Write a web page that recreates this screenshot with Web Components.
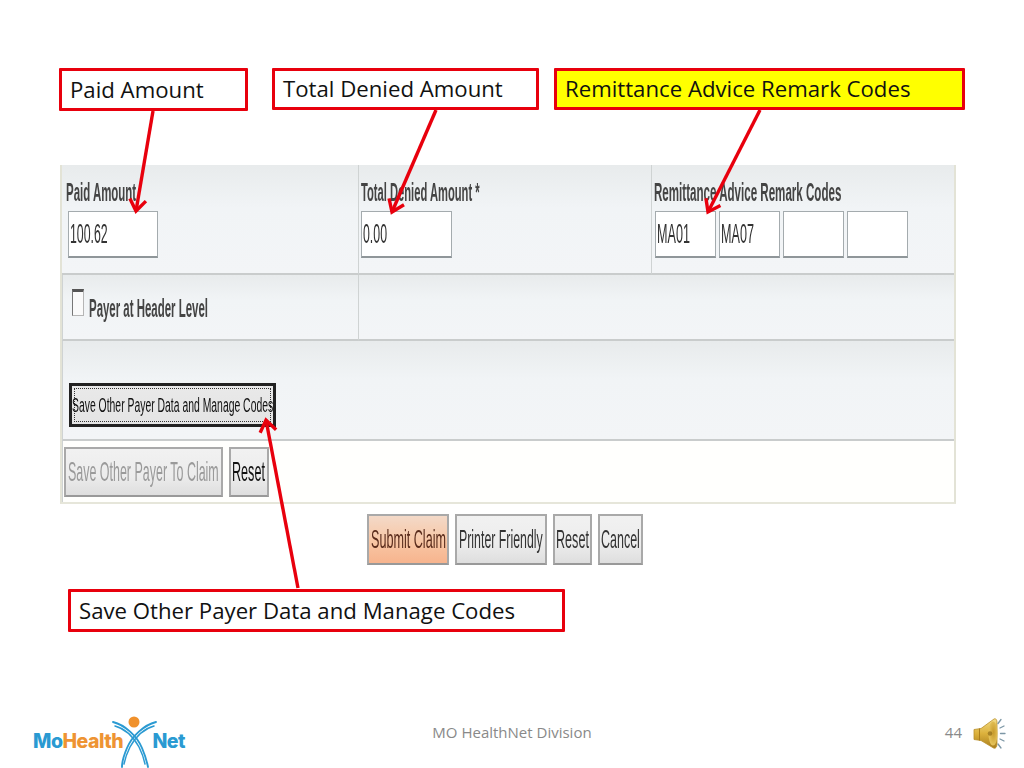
<!DOCTYPE html>
<html lang="en">
<head>
<meta charset="utf-8">
<title>MO HealthNet slide 44</title>
<style>
  html, body { margin: 0; padding: 0; background: #fff; }
</style>
</head>
<body>
<slide-page>
  <callout-row slot="callouts">
    <call-out w="189" h="43">Paid Amount</call-out>
    <call-out w="267" h="42">Total Denied Amount</call-out>
    <call-out w="411" h="42" fill="#ffff00">Remittance Advice Remark Codes</call-out>
  </callout-row>

  <claim-form slot="form"></claim-form>

  <action-row slot="actions">
    <old-button w="82" tone="submit"><squeeze-text w="75" size="26" sx=".485" color="#5a2c1c">Submit Claim</squeeze-text></old-button>
    <old-button w="92"><squeeze-text w="85" size="26" sx=".475" color="#333">Printer Friendly</squeeze-text></old-button>
    <old-button w="39"><squeeze-text w="33" size="26" sx=".485" color="#333">Reset</squeeze-text></old-button>
    <old-button w="45"><squeeze-text w="39" size="26" sx=".48" color="#333">Cancel</squeeze-text></old-button>
  </action-row>

  <call-out slot="bottom" w="497" h="43">Save Other Payer Data and Manage Codes</call-out>

  <slide-footer slot="footer" page="44">MO HealthNet Division</slide-footer>
</slide-page>

<script>
// squashed screenshot text: laid out at its final width, drawn wide then scaled down
class SqueezeText extends HTMLElement {
    constructor() {
        super();
        this.attachShadow({ mode: "open" });
    }
    connectedCallback() {
        const w = this.getAttribute("w");
        const size = this.getAttribute("size") || 26;
        const sx = this.getAttribute("sx") || 0.5;
        const weight = this.getAttribute("weight") || 400;
        const color = this.getAttribute("color") || "#333";
        this.shadowRoot.innerHTML = `
            <style>
                :host { display: inline-block; width: ${w}px; height: ${size * 1.1}px; flex: none; }
                span {
                    display: inline-block;
                    white-space: nowrap;
                    font: ${weight} ${size}px/1.1 "Liberation Sans", Arial, sans-serif;
                    color: ${color};
                    transform: scaleX(${sx});
                    transform-origin: 0 50%;
                }
            </style>
            <span><slot></slot></span>
        `;
    }
}
customElements.define("squeeze-text", SqueezeText);

class CallOut extends HTMLElement {
    constructor() {
        super();
        this.attachShadow({ mode: "open" });
    }
    connectedCallback() {
        const fill = this.getAttribute("fill") || "#fff";
        this.shadowRoot.innerHTML = `
            <style>
                :host {
                    display: flex;
                    align-items: center;
                    box-sizing: border-box;
                    width: ${this.getAttribute("w")}px;
                    height: ${this.getAttribute("h")}px;
                    padding: 0 0 1px 8px;
                    background: ${fill};
                    border: 3px solid #e8000d;
                    border-radius: 1px;
                    font: 400 22.2px "Open Sans", sans-serif;
                    color: #111;
                    white-space: nowrap;
                }
            </style>
            <slot></slot>
        `;
    }
}
customElements.define("call-out", CallOut);

class CalloutRow extends HTMLElement {
    constructor() {
        super();
        this.attachShadow({ mode: "open" }).innerHTML = `
            <style>
                :host { display: flex; align-items: flex-start; gap: 24px; padding-left: 59px; }
                ::slotted(:last-child) { margin-left: -9px; }
            </style>
            <slot></slot>
        `;
    }
}
customElements.define("callout-row", CalloutRow);

class ActionRow extends HTMLElement {
    constructor() {
        super();
        this.attachShadow({ mode: "open" }).innerHTML = `
            <style>
                :host { display: flex; gap: 6px; padding-left: 367px; filter: blur(.35px); }
            </style>
            <slot></slot>
        `;
    }
}
customElements.define("action-row", ActionRow);

class OldButton extends HTMLElement {
    constructor() {
        super();
        this.attachShadow({ mode: "open" });
    }
    connectedCallback() {
        const tone = this.getAttribute("tone");
        const bg = tone === "submit"
            ? "linear-gradient(#f3d9c8, #f8c6a4 55%, #f7b48e)"
            : "linear-gradient(#f1f1f1, #ececec 60%, #dedede)";
        this.shadowRoot.innerHTML = `
            <style>
                :host {
                    display: flex;
                    align-items: center;
                    justify-content: center;
                    box-sizing: border-box;
                    flex: none;
                    width: ${this.getAttribute("w")}px;
                    height: ${this.getAttribute("h") || 51}px;
                    background: ${bg};
                    border: 2px solid #a9a9a9;
                    border-bottom-color: #999;
                }
            </style>
            <slot></slot>
        `;
    }
}
customElements.define("old-button", OldButton);

class TextBox extends HTMLElement {
    constructor() {
        super();
        this.attachShadow({ mode: "open" });
    }
    connectedCallback() {
        this.shadowRoot.innerHTML = `
            <style>
                :host {
                    display: flex;
                    align-items: center;
                    box-sizing: border-box;
                    flex: none;
                    width: ${this.getAttribute("w")}px;
                    height: 47px;
                    padding-left: 1px;
                    background: #fff;
                    border: 1.5px solid #a4abae;
                    border-bottom: 2px solid #8f9699;
                }
            </style>
            <slot></slot>
        `;
    }
}
customElements.define("text-box", TextBox);

class FormField extends HTMLElement {
    constructor() {
        super();
        this.attachShadow({ mode: "open" }).innerHTML = `
            <style>
                :host { display: block; padding: 13px 0 0 var(--label-x, 4px); }
                .label { height: 33px; }
                .boxes { display: flex; gap: 3px; margin-left: var(--box-shift, 0); }
            </style>
            <div class="label"><slot name="label"></slot></div>
            <div class="boxes"><slot></slot></div>
        `;
    }
}
customElements.define("form-field", FormField);

class ClaimForm extends HTMLElement {
    constructor() {
        super();
        this.attachShadow({ mode: "open" }).innerHTML = `
            <style>
                :host {
                    display: block;
                    box-sizing: border-box;
                    width: 896px;
                    height: 339px;
                    margin-left: 60px;
                    border-left: 2px solid #e3e3d6;
                    border-right: 2px solid #e3e3d6;
                    border-bottom: 2px solid #e6e6da;
                    filter: blur(.35px);
                }
                .grid {
                    display: grid;
                    grid-template-columns: 296px 293px 1fr;
                    grid-template-rows: 110px 66px 100px 1fr;
                    height: 100%;
                }
                .cell {
                    box-sizing: border-box;
                    background: linear-gradient(#e8ebec, #f1f4f6 40%, #f3f5f7);
                    border-bottom: 2px solid #c9cccc;
                }
                .cell + .cell { border-left: 1px solid #cfd3d3; }
                .wide { grid-column: 2 / 4; }
                .full { grid-column: 1 / -1; }
                .c1 { --label-x: 4px; --box-shift: 2px; }
                .c2 { --label-x: 2px; }
                .c3 { --label-x: 2px; --box-shift: 1px; }
                .check {
                    display: flex;
                    align-items: flex-start;
                    gap: 5px;
                    padding: 14px 0 0 9px;
                }
                .tick {
                    width: 12px;
                    height: 27px;
                    box-sizing: border-box;
                    flex: none;
                    background: #fafafa;
                    border: 1px solid #b5b5b5;
                    border-top: 3px solid #555;
                    border-left-color: #777;
                }
                .check squeeze-text { margin-top: 5px; }
                .save-data { padding: 42px 0 0 6px; }
                .save-data old-button {
                    border: 3px solid #222;
                    background: linear-gradient(#e9e9e9, #e4e4e4);
                    outline: 1px dotted #333;
                    outline-offset: -6px;
                }
                .bottom {
                    display: flex;
                    gap: 6px;
                    align-items: flex-start;
                    padding: 6px 0 0 1px;
                    background: #fffffd;
                    border-bottom: 0;
                }
            </style>
            <div class="grid">
                <div class="cell c1">
                    <form-field>
                        <squeeze-text slot="label" w="70" size="26" sx=".44" weight="700" color="#444">Paid Amount</squeeze-text>
                        <text-box w="90"><squeeze-text w="40" size="28" sx=".44">100.62</squeeze-text></text-box>
                    </form-field>
                </div>
                <div class="cell c2">
                    <form-field>
                        <squeeze-text slot="label" w="118" size="26" sx=".43" weight="700" color="#444">Total Denied Amount *</squeeze-text>
                        <text-box w="91"><squeeze-text w="26" size="28" sx=".44">0.00</squeeze-text></text-box>
                    </form-field>
                </div>
                <div class="cell c3">
                    <form-field>
                        <squeeze-text slot="label" w="187" size="26" sx=".445" weight="700" color="#444">Remittance Advice Remark Codes</squeeze-text>
                        <text-box w="61"><squeeze-text w="34" size="28" sx=".45">MA01</squeeze-text></text-box>
                        <text-box w="61"><squeeze-text w="34" size="28" sx=".45">MA07</squeeze-text></text-box>
                        <text-box w="61"></text-box>
                        <text-box w="61"></text-box>
                    </form-field>
                </div>

                <div class="cell check">
                    <span class="tick"></span>
                    <squeeze-text w="122" size="26" sx=".44" weight="700" color="#444">Payer at Header Level</squeeze-text>
                </div>
                <div class="cell wide"></div>

                <div class="cell full save-data">
                    <old-button w="207" h="44"><squeeze-text w="201" size="20" sx=".52" color="#111">Save Other Payer Data and Manage Codes</squeeze-text></old-button>
                </div>

                <div class="cell full bottom">
                    <old-button w="159" h="50"><squeeze-text w="152" size="28" sx=".445" color="#9a9a9a">Save Other Payer To Claim</squeeze-text></old-button>
                    <old-button w="40" h="50"><squeeze-text w="34" size="28" sx=".45" color="#111">Reset</squeeze-text></old-button>
                </div>
            </div>
        `;
    }
}
customElements.define("claim-form", ClaimForm);

class BrandLogo extends HTMLElement {
    constructor() {
        super();
        this.attachShadow({ mode: "open" }).innerHTML = `
            <style>
                :host { display: block; position: relative; width: 154px; height: 56px; margin-left: 33px; }
                .name {
                    position: absolute;
                    left: 0;
                    top: 18px;
                    width: 152px;
                    display: flex;
                    justify-content: space-between;
                    font: 800 19.5px/22px Inter, sans-serif;
                    letter-spacing: -.5px;
                    color: #2a9ad2;
                }
                .name b { font-weight: 800; color: #ee9433; }
                svg { position: absolute; left: 0; top: 0; }
            </style>
            <div class="name"><span>Mo<b>Health</b></span><span>Net</span></div>
            <svg width="154" height="56" viewBox="0 0 154 56" fill="none">
                <circle cx="101" cy="10" r="5.500" fill="#f0912c"/>
                <g stroke="#2a9ad2" stroke-linecap="round">
                    <path d="M80 10C92 13 104 24 109 36C112 43 114 50 115 55" stroke-width="1.900"/>
                    <path d="M82 14C93 17 101 26 106 35C109 41 111 47 112 52" stroke-width="1.500"/>
                    <path d="M123 10C111 13 99 24 94 36C91 43 89 50 89 55" stroke-width="1.900"/>
                    <path d="M121 14C110 17 102 26 97 35C94 41 92 47 91 52" stroke-width="1.500"/>
                </g>
            </svg>
        `;
    }
}
customElements.define("brand-logo", BrandLogo);

class SoundIcon extends HTMLElement {
    constructor() {
        super();
        this.attachShadow({ mode: "open" }).innerHTML = `
            <style>:host { display: block; width: 33px; height: 34px; flex: none; }</style>
            <svg width="33" height="34" viewBox="0 0 33 34" fill="none">
                <defs>
                    <linearGradient id="brass" x1="0" y1="0" x2="0" y2="1">
                        <stop offset="0" stop-color="#f3dc85"/>
                        <stop offset=".5" stop-color="#dcb13c"/>
                        <stop offset="1" stop-color="#a97e1d"/>
                    </linearGradient>
                    <radialGradient id="cone" cx=".55" cy=".45" r=".6">
                        <stop offset="0" stop-color="#c79a2b"/>
                        <stop offset="1" stop-color="#e9c860"/>
                    </radialGradient>
                </defs>
                <path d="M1 12.500L8 11.500L21 2C23 1 24 3 24 6V27C24 30 22.500 32 20.500 31L8 23.500L1 22.500Z" fill="url(#brass)" stroke="#b98f2c" stroke-width=".8"/>
                <path d="M6.500 11.500V23.500" stroke="#a97e1d" stroke-width="1"/>
                <ellipse cx="20" cy="16.500" rx="4.500" ry="12" fill="url(#cone)"/>
                <circle cx="17" cy="16.500" r="2.300" fill="#8f6a17" opacity=".7"/>
                <g stroke="#7d97a6" stroke-width="1.300" stroke-linecap="round">
                    <path d="M25 6.500L28 2.500"/>
                    <path d="M27 11L31 9"/>
                    <path d="M27.500 16.500H32"/>
                    <path d="M27 22L31 24"/>
                    <path d="M25 27L28 31"/>
                </g>
            </svg>
        `;
    }
}
customElements.define("sound-icon", SoundIcon);

class SlideFooter extends HTMLElement {
    constructor() {
        super();
        this.attachShadow({ mode: "open" });
    }
    connectedCallback() {
        this.shadowRoot.innerHTML = `
            <style>
                :host {
                    display: grid;
                    grid-template-columns: 1fr auto 1fr;
                    align-items: start;
                    font: 400 15px "Open Sans", sans-serif;
                    color: #898989;
                }
                .mid { padding: 10px 0 0; }
                .right {
                    display: flex;
                    justify-content: flex-end;
                    gap: 11px;
                    padding: 5px 18px 0 0;
                }
                .right span { padding-top: 5px; }
            </style>
            <brand-logo></brand-logo>
            <div class="mid"><slot></slot></div>
            <div class="right"><span>${this.getAttribute("page")}</span><sound-icon></sound-icon></div>
        `;
    }
}
customElements.define("slide-footer", SlideFooter);

// red pointers lie over the callouts and the form
class PointerLayer extends HTMLElement {
    constructor() {
        super();
        const arrows = [
            [153, 111, 136, 211],
            [436, 110, 392, 212],
            [760, 110, 708, 212],
            [298, 588, 266, 420],
        ];
        const heads = arrows.map(([x1, y1, x2, y2]) => {
            const a = Math.atan2(y2 - y1, x2 - x1);
            const len = 14;
            const p = (d) => `${x2 - len * Math.cos(a + d)},${y2 - len * Math.sin(a + d)}`;
            return `<path d="M${x1} ${y1}L${x2} ${y2}"/><polyline points="${p(0.62)} ${x2},${y2} ${p(-0.62)}"/>`;
        }).join("");
        this.attachShadow({ mode: "open" }).innerHTML = `
            <style>
                :host { position: absolute; inset: 0; pointer-events: none; }
            </style>
            <svg width="1024" height="768" fill="none" stroke="#e8000d" stroke-width="3.400">${heads}</svg>
        `;
    }
}
customElements.define("pointer-layer", PointerLayer);

class SlidePage extends HTMLElement {
    constructor() {
        super();
        this.attachShadow({ mode: "open" }).innerHTML = `
            <style>
                :host {
                    display: block;
                    position: relative;
                    box-sizing: border-box;
                    width: 1024px;
                    height: 768px;
                    padding-top: 68px;
                    overflow: hidden;
                    background: #fff;
                }
                .form { margin-top: 54px; }
                .actions { margin-top: 10px; }
                .bottom { margin: 24px 0 0 68px; }
                .footer { margin-top: 80px; }
            </style>
            <slot name="callouts"></slot>
            <div class="form"><slot name="form"></slot></div>
            <div class="actions"><slot name="actions"></slot></div>
            <div class="bottom"><slot name="bottom"></slot></div>
            <div class="footer"><slot name="footer"></slot></div>
            <pointer-layer></pointer-layer>
        `;
    }
}
customElements.define("slide-page", SlidePage);
</script>
</body>
</html>
